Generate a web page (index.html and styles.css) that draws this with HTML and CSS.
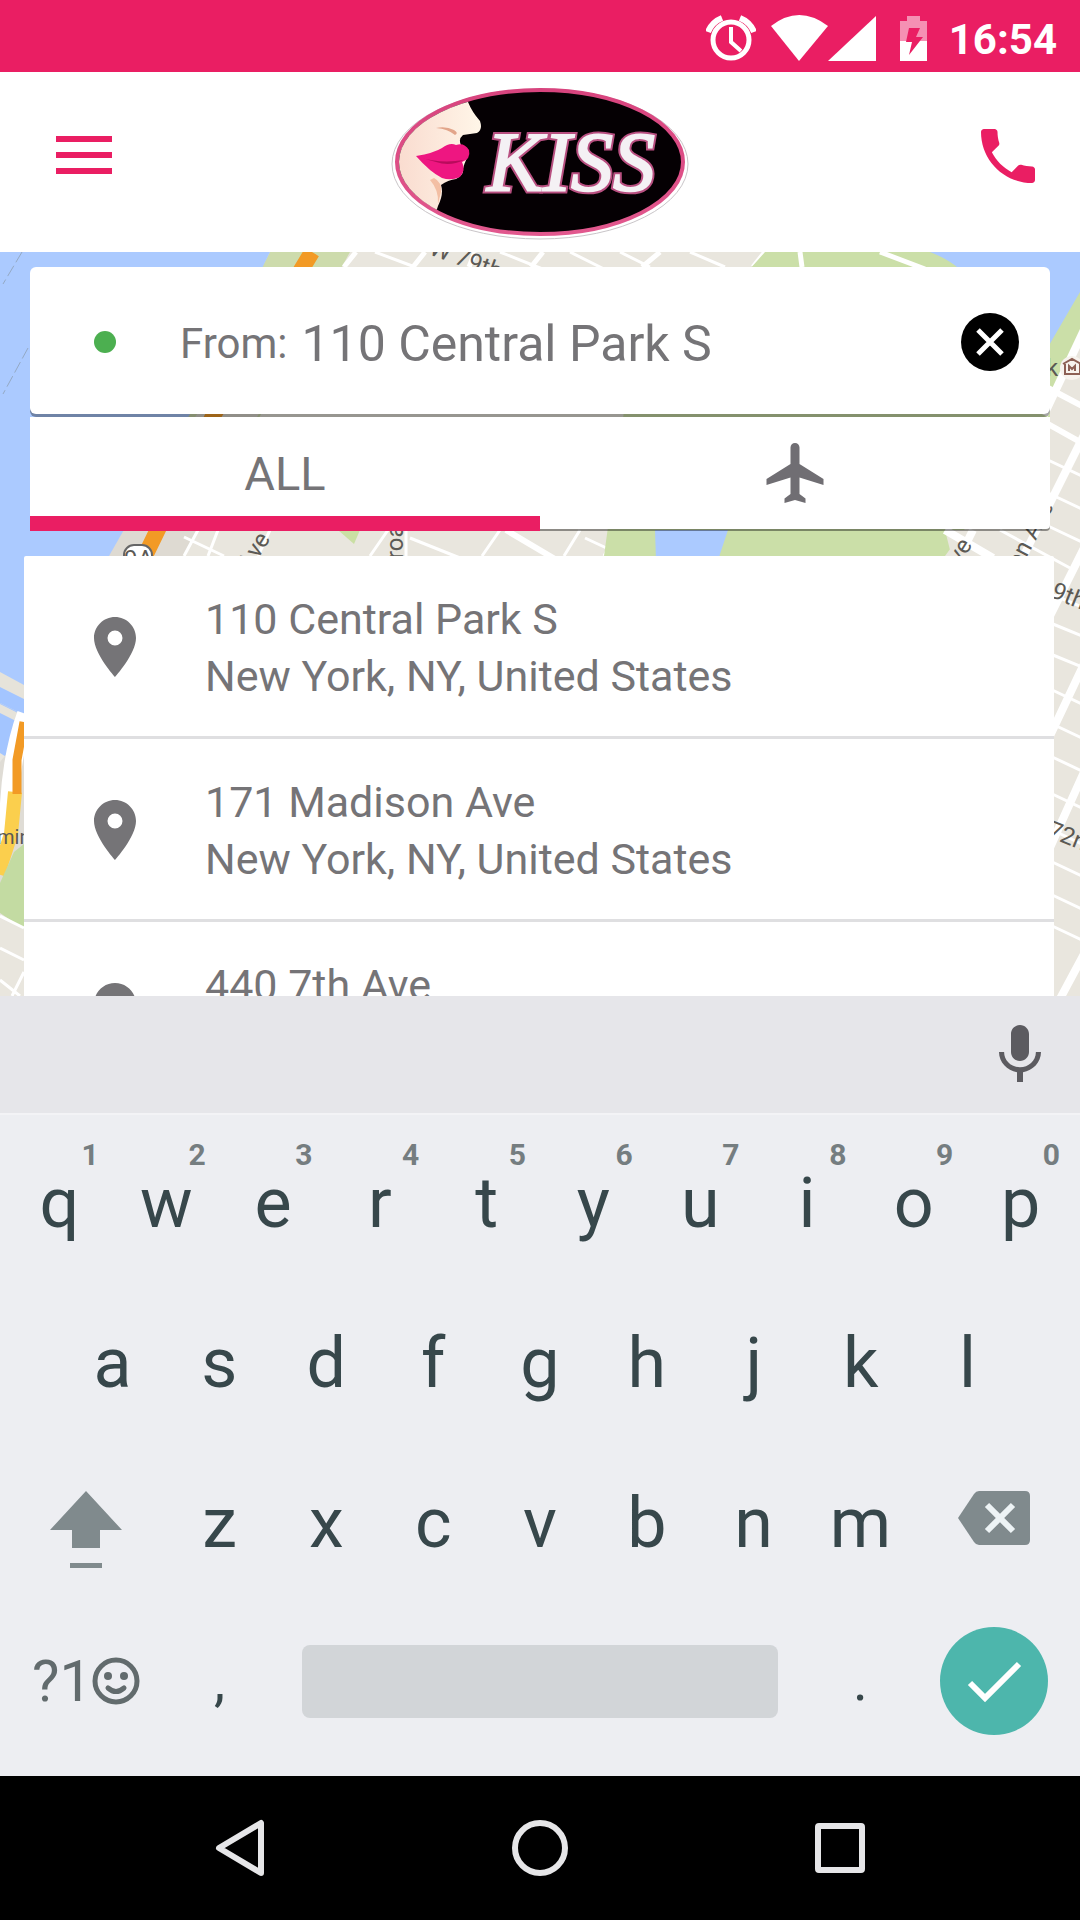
FILE: index.html
```html
<!DOCTYPE html>
<html lang="en">
<head>
  <meta charset="utf-8">
  <meta name="viewport" content="width=device-width, initial-scale=1">
  <title>Kiss – Pick-up address</title>
  <link rel="stylesheet" href="styles.css">
</head>
<body>
  <div class="status-bar">
    <svg class="status-icon alarm" viewBox="0 0 50 46" width="50" height="46" aria-hidden="true">
      <circle cx="25" cy="25" r="18" fill="none" stroke="#fff" stroke-width="5"/>
      <path d="M2 17Q6 7 16 3M48 17Q44 7 34 3" fill="none" stroke="#fff" stroke-width="6"/>
      <path d="M25 12v15l10 9" fill="none" stroke="#fff" stroke-width="4"/>
    </svg>
    <svg class="status-icon" viewBox="0 0 105 46" width="105" height="46" aria-hidden="true">
      <path d="M0 11Q28 -11 57 11L28 46z" fill="#fff"/>
      <path d="M105 1v45H57z" fill="#fff"/>
    </svg>
    <svg class="status-icon battery" viewBox="0 0 27 46" width="27" height="46" aria-hidden="true">
      <path d="M0 6h7V1h13v5h7v20H0z" fill="#f590b3"/>
      <path d="M0 26h27v20H0z" fill="#fff"/>
      <path d="M9 13h11l-4 9h7L9 40l3-13H6z" fill="#ea1e63"/>
    </svg>
    <time class="clock">16:54</time>
  </div>

  <header class="app-bar">
    <button class="icon-button" type="button" aria-label="Menu">
      <svg viewBox="0 0 56 38" width="56" height="38"><path d="M0 0h56v6H0zM0 16h56v6H0zM0 32h56v6H0z" fill="#ea1e63"/></svg>
    </button>
    <svg class="logo" viewBox="0 0 300 160" width="300" height="160" role="img" aria-label="Kiss">
      <defs>
        <clipPath id="face-clip"><ellipse cx="150" cy="80" rx="141" ry="70"/></clipPath>
        <linearGradient id="rim" x1="0" y1="0" x2="0" y2="1">
          <stop offset="0" stop-color="#d8447e"/><stop offset="1" stop-color="#e2588e"/>
        </linearGradient>
        <linearGradient id="skin" x1="0" y1="0" x2="1" y2="0">
          <stop offset="0" stop-color="#f9d9cd"/><stop offset="1" stop-color="#fff6e8"/>
        </linearGradient>
      </defs>
      <ellipse cx="150" cy="82" rx="148" ry="75" fill="#fff" stroke="#c9c5c8" stroke-width="1"/>
      <ellipse cx="150" cy="80" rx="143" ry="72" fill="#050003" stroke="url(#rim)" stroke-width="4"/>
      <g clip-path="url(#face-clip)">
        <path d="M0 0H74L78 20Q82 30 90 39Q93 48 87 51L73 53Q68 57 71 63Q80 70 77 76Q74 82 73 87Q74 93 66 97Q58 98 51 103Q54 112 48 124L44 136H0z" fill="url(#skin)"/>
        <path d="M46 46Q56 44 64 48Q69 51 65 53Q58 47 46 46z" fill="#e2a58a"/>
        <path d="M44 96Q52 100 51 110L48 122Q49 108 40 98z" fill="#f3bfa4"/>
        <path d="M26 74Q44 71 52 66Q60 60 66 63Q74 60 79 68Q81 77 72 80Q76 88 70 95Q61 99 52 96Q40 90 26 74z" fill="#ee1681"/>
        <path d="M28 75Q50 82 74 78Q60 85 46 80z" fill="#b80b5c"/>
      </g>
      <text class="logo-text logo-outline" x="97" y="109">KISS</text>
      <text class="logo-text" x="97" y="109">KISS</text>
    </svg>
    <a class="icon-button call" href="tel:" aria-label="Call">
      <svg viewBox="3 3 18 18" width="54" height="54"><path d="M6.620 10.790c1.440 2.830 3.760 5.140 6.590 6.590l2.200-2.200c.27-.27.67-.36 1.020-.24 1.120.37 2.330.57 3.570.57.55 0 1 .45 1 1V20c0 .55-.45 1-1 1-9.390 0-17-7.610-17-17 0-.55.45-1 1-1h3.500c.55 0 1 .45 1 1 0 1.250.2 2.450.57 3.570.11.35.03.74-.25 1.020z" fill="#ea1e63"/></svg>
    </a>
  </header>

  <main class="map-area">
    <svg class="map" viewBox="0 0 1080 744" preserveAspectRatio="xMidYMin slice" aria-hidden="true">
      <path d="M0 0h1080v744H0z" fill="#e9e6de"/>
      <!-- river and west shore -->
      <path d="M270 0h80L180 310H100z" fill="#cddbac"/>
      <path d="M205 150h60L180 310H100z" fill="#dedad2"/>
      <path d="M0 0H270L190 162 109 304 24 446 0 430z" fill="#abcaff"/>
      <path d="M0 451l24 12v20L8 506 0 501z" fill="#a3c5ff"/>
      <path d="M0 420l24 13v14L0 435z" fill="#e6e3da"/>
      <path d="M0 435l24 12v16L0 451z" fill="#a3c5ff"/>
      <path d="M0 452l24 12v9L0 461z" fill="#e6e3da"/>
      <path d="M22 0 3 32M28 96 3 142" fill="none" stroke="#94a9c4" stroke-width="1" stroke-dasharray="12 4"/>
      <path d="M312 0 214 162 145 304" fill="none" stroke="#f29a25" stroke-width="16"/>
      <!-- city blocks west of the park -->
      <g fill="none" stroke="#fff" stroke-width="3">
        <path d="M356 0l-12 15M425 0l-12 15M475 0l-6 15M543 0l-12 15M660 0l-18 15M765 0l-12 15" stroke-width="5"/>
        <path d="M375 0l40 15M500 0l45 18M570 0l40 20M620 0l30 15M690 0l35 15"/>
        <path d="M198 278l-14 26M218 278l-10 26M184 285l40 19M406 278v26M388 278l-18 26M270 278l-12 26"/>
        <path d="M506 278l54 32" stroke-width="6"/>
        <path d="M410 286l50 20M500 278l-18 26M580 278l-16 26M585 286l30 14M618 278l-14 26"/>
      </g>
      <path d="M338 278h22l-6 14z" fill="#cadfa3"/>
      <!-- park -->
      <path d="M765 0h315v95l-30 50v40H1032L945 304H604l20-145z" fill="#cbdfa8"/>
      <path d="M930 0h150v40l-32 55v-68h-80q-10-16-38-27z" fill="#abcaff"/>
      <path d="M655 278h73l-10 30h-62z" fill="#abcaff"/>
      <path d="M800 0l2 15M880 0l45 17" fill="none" stroke="#fff" stroke-width="5"/>
      <!-- east side -->
      <path d="M1080 95V744h-30V150zM945 278h120v60H960z" fill="#e9e6de"/>
      <g fill="none" stroke="#fff" stroke-width="8">
        <path d="M1084 78l-40 85"/>
        <path d="M1084 183l-60 120"/>
        <path d="M1084 296l-36 72M1084 412l-36 76M1084 520l-36 80M1084 702l-30 56"/>
        <path d="M945 278l48 28M973 278l-10 20"/>
      </g>
      <g fill="none" stroke="#fff" stroke-width="3">
        <path d="M1048 136l34 18M1048 172l34 19" stroke-width="6"/>
        <path d="M1048 208l34 16M1048 241l34 16M1048 274l34 16M1000 278l70 38M1048 341l34 14M1048 370l34 14M1048 401l34 14M1048 436l34 16M1048 470l34 16M1048 503l34 16M1048 540l34 16M1048 576l34 16M1048 608l34 16M1048 641l34 16M1048 672l34 16"/>
      </g>
      <circle cx="1072" cy="116" r="12" fill="#f7f3ee"/>
      <path d="M1063 112l9-5 9 5M1065 112v10h15v-10M1069 119v-5l3 3 3-3v5" fill="none" stroke="#8d6055" stroke-width="2"/>
      <!-- south-west corner -->
      <path d="M0 510l24-30v150L0 640z" fill="#dfdcd5"/>
      <path d="M26 462Q12 500 9 552L-4 612" fill="none" stroke="#fff" stroke-width="18"/>
      <path d="M15 540 11 582-2 622" fill="none" stroke="#fbcf4d" stroke-width="14"/>
      <path d="M24 470 17 508 17 542" fill="none" stroke="#f29a25" stroke-width="9"/>
      <path d="M14 600l10-8v85l-24-16v-30z" fill="#c3dba2"/>
      <path d="M0 663l24 14v67H0z" fill="#e9e6de"/>
      <path d="M0 664l24 12M0 696l24 12M24 720l-12 24M0 728l20 16" fill="none" stroke="#fff" stroke-width="3"/>
      <rect x="124" y="293" width="28" height="26" rx="10" fill="#fff" stroke="#666" stroke-width="2"/>
      <g class="map-label">
        <text x="124" y="315">9A</text>
        <text class="map-place" x="-3" y="592">min</text>
        <text transform="translate(428 2) rotate(20)">W 79th</text>
        <text transform="translate(250 320) rotate(-58)">Ave</text>
        <text transform="translate(403 322) rotate(-90)">Broad</text>
        <text transform="translate(952 326) rotate(-58)">Ave</text>
        <text transform="translate(1020 318) rotate(-62)">on Ave</text>
        <text transform="translate(1050 345) rotate(22)">9th</text>
        <text transform="translate(1046 584) rotate(22)">72nd</text>
        <text x="1046" y="124">k</text>
      </g>
    </svg>

    <div class="search">
      <div class="from-card">
        <span class="dot"></span>
        <label class="from-label" for="from">From:</label>
        <input class="from-input" id="from" type="text" value="110 Central Park S">
        <button class="clear" type="button" aria-label="Clear">
          <svg viewBox="0 0 58 58" width="58" height="58"><circle cx="29" cy="29" r="29"/><path d="M17 17l24 24M41 17 17 41" stroke="#fff" stroke-width="5"/></svg>
        </button>
      </div>
      <nav class="tabs">
        <button class="tab active" type="button">ALL</button>
        <button class="tab" type="button" aria-label="Airports">
          <svg viewBox="0 0 24 24" width="72" height="72"><path d="M21.500 16v-2L13.500 9V3.500c0-.83-.67-1.500-1.500-1.500s-1.500.67-1.500 1.500V9l-8 5v2l8-2.500V19l-2 1.500V22l3.500-1 3.500 1v-1.500L13.500 19v-5.500z" fill="#706e73"/></svg>
        </button>
      </nav>
    </div>

    <ul class="results">
      <li class="result">
        <svg class="pin" viewBox="0 0 24 24" width="72" height="72" aria-hidden="true"><path d="M12 2C8.130 2 5 5.130 5 9c0 5.250 7 13 7 13s7-7.750 7-13c0-3.870-3.130-7-7-7zm0 9.500a2.500 2.500 0 1 1 0-5 2.500 2.500 0 0 1 0 5z"/></svg>
        <span>110 Central Park S<br>New York, NY, United States</span>
      </li>
      <li class="result">
        <svg class="pin" viewBox="0 0 24 24" width="72" height="72" aria-hidden="true"><path d="M12 2C8.130 2 5 5.130 5 9c0 5.250 7 13 7 13s7-7.750 7-13c0-3.870-3.130-7-7-7zm0 9.500a2.500 2.500 0 1 1 0-5 2.500 2.500 0 0 1 0 5z"/></svg>
        <span>171 Madison Ave<br>New York, NY, United States</span>
      </li>
      <li class="result">
        <svg class="pin" viewBox="0 0 24 24" width="72" height="72" aria-hidden="true"><path d="M12 2C8.130 2 5 5.130 5 9c0 5.250 7 13 7 13s7-7.750 7-13c0-3.870-3.130-7-7-7zm0 9.500a2.500 2.500 0 1 1 0-5 2.500 2.500 0 0 1 0 5z"/></svg>
        <span>440 7th Ave</span>
      </li>
    </ul>
  </main>

  <section class="keyboard" aria-label="Keyboard">
    <div class="suggestions">
      <button class="mic" type="button" aria-label="Voice input">
        <svg viewBox="0 0 24 24" width="72" height="72"><path d="M12 14c1.660 0 3-1.340 3-3V5c0-1.660-1.340-3-3-3S9 3.340 9 5v6c0 1.660 1.340 3 3 3zm5.300-3c0 3-2.540 5.100-5.300 5.100S6.700 14 6.700 11H5c0 3.410 2.720 6.230 6 6.720V21h2v-3.280c3.280-.48 6-3.300 6-6.720z" fill="#5c5b60"/></svg>
      </button>
    </div>
    <div class="key-rows">
      <div class="key-row">
        <button class="key" type="button">q<span class="hint">1</span></button>
        <button class="key" type="button">w<span class="hint">2</span></button>
        <button class="key" type="button">e<span class="hint">3</span></button>
        <button class="key" type="button">r<span class="hint">4</span></button>
        <button class="key" type="button">t<span class="hint">5</span></button>
        <button class="key" type="button">y<span class="hint">6</span></button>
        <button class="key" type="button">u<span class="hint">7</span></button>
        <button class="key" type="button">i<span class="hint">8</span></button>
        <button class="key" type="button">o<span class="hint">9</span></button>
        <button class="key" type="button">p<span class="hint">0</span></button>
      </div>
      <div class="key-row inset">
        <button class="key" type="button">a</button>
        <button class="key" type="button">s</button>
        <button class="key" type="button">d</button>
        <button class="key" type="button">f</button>
        <button class="key" type="button">g</button>
        <button class="key" type="button">h</button>
        <button class="key" type="button">j</button>
        <button class="key" type="button">k</button>
        <button class="key" type="button">l</button>
      </div>
      <div class="key-row">
        <button class="key wide shift" type="button" aria-label="Shift">
          <svg viewBox="0 0 72 78" width="72" height="78"><path d="M36 1 72 40H50v18H22V40H0zM20 73h32v5H20z" fill="#808a8d"/></svg>
        </button>
        <button class="key" type="button">z</button>
        <button class="key" type="button">x</button>
        <button class="key" type="button">c</button>
        <button class="key" type="button">v</button>
        <button class="key" type="button">b</button>
        <button class="key" type="button">n</button>
        <button class="key" type="button">m</button>
        <button class="key wide delete" type="button" aria-label="Delete">
          <svg viewBox="0 0 72 54" width="72" height="54"><path d="M0 27 16 3Q18 0 21 0H67Q72 0 72 5V49Q72 54 67 54H21Q18 54 16 51z" fill="#808a8d"/><path d="M29 14l26 26M55 14 29 40" stroke="#edf3f5" stroke-width="6"/></svg>
        </button>
      </div>
      <div class="key-row bottom">
        <button class="key wide symbols" type="button" aria-label="?1 symbols">?1<svg viewBox="0 0 48 48" width="48" height="48"><circle cx="24" cy="24" r="21" fill="none" stroke="#626b6d" stroke-width="5"/><circle cx="16" cy="19" r="4" fill="#626b6d"/><circle cx="32" cy="19" r="4" fill="#626b6d"/><path d="M16 31q8 7 16 0" fill="none" stroke="#626b6d" stroke-width="5" stroke-linecap="round"/></svg></button>
        <button class="key punctuation" type="button">,</button>
        <button class="key space" type="button" aria-label="Space"><span class="space-bar"></span></button>
        <button class="key punctuation" type="button">.</button>
        <button class="key wide" type="button" aria-label="Done">
          <svg class="done" viewBox="0 0 108 108" width="108" height="108"><circle cx="54" cy="54" r="54" fill="#4db6ac"/><path d="M30 56l15 15 34-34" fill="none" stroke="#fff" stroke-width="6"/></svg>
        </button>
      </div>
    </div>
  </section>

  <nav class="system-nav">
    <button class="nav-button" type="button" aria-label="Back">
      <svg viewBox="0 0 60 60" width="60" height="60"><path d="M51 5v50L9 30z" fill="none" stroke="#e6e6e8" stroke-width="6" stroke-linejoin="round"/></svg>
    </button>
    <button class="nav-button" type="button" aria-label="Home">
      <svg viewBox="0 0 60 60" width="60" height="60"><circle cx="30" cy="30" r="25" fill="none" stroke="#e6e6e8" stroke-width="6"/></svg>
    </button>
    <button class="nav-button" type="button" aria-label="Recent apps">
      <svg viewBox="0 0 60 60" width="60" height="60"><rect x="8" y="8" width="44" height="44" rx="1" fill="none" stroke="#e6e6e8" stroke-width="6"/></svg>
    </button>
  </nav>
</body>
</html>
```
FILE: styles.css
```css
* {
  box-sizing: border-box;
}

body {
  margin: 0;
  height: 100vh;
  display: flex;
  flex-direction: column;
  overflow: hidden;
  font-family: Roboto, "Liberation Sans", sans-serif;
  color: #757477;
  background: #fff;
}

button,
input {
  margin: 0;
  padding: 0;
  border: 0;
  background: none;
  font: inherit;
  color: inherit;
}

svg {
  display: block;
  flex: none;
}

/* Status bar */
.status-bar {
  flex: none;
  height: 72px;
  padding: 0 23px;
  display: flex;
  align-items: center;
  justify-content: flex-end;
  background: #ea1e63;
  color: #fff;
}

.status-icon {
  margin-top: 4px;
}

.alarm {
  margin-right: 15px;
}

.battery {
  margin: 4px 22px 0 24px;
}

.clock {
  margin-top: 7px;
  font-size: 42px;
  font-weight: 700;
  line-height: 48px;
}

/* App bar */
.app-bar {
  flex: none;
  height: 180px;
  padding: 0 45px 0 56px;
  display: flex;
  align-items: center;
  justify-content: space-between;
  background: #fff;
}

.app-bar {
  display: grid;
  grid-template-columns: 1fr auto 1fr;
  padding: 0 45px;
}

.icon-button {
  justify-self: start;
  margin-left: 11px;
  padding-bottom: 14px;
}

.icon-button.call {
  justify-self: end;
  margin-left: 0;
  padding-bottom: 12px;
}

.logo-text {
  font: italic 84px "Liberation Serif", "Times New Roman", serif;
  fill: #f4f1f4;
  stroke: #f4f1f4;
  stroke-width: 2;
}

.logo-outline {
  stroke: #b84f80;
  stroke-width: 6;
}

/* Map and search */
.map-area {
  position: relative;
  flex: 1;
  min-height: 0;
  overflow: hidden;
  padding: 15px 24px 0;
}

.map {
  position: absolute;
  inset: 0;
  width: 100%;
  height: 100%;
}

.map-label {
  font-size: 24px;
  fill: #5b5954;
}

.map-place {
  font-size: 20px;
}

.search {
  position: relative;
  margin: 0 6px;
}

.from-card {
  height: 147px;
  padding: 3px 31px 0 64px;
  display: flex;
  align-items: center;
  background: #fff;
  border-radius: 6px;
  box-shadow: 0 3px 0 rgba(0, 0, 0, 0.35);
}

.dot {
  flex: none;
  width: 22px;
  height: 22px;
  margin-right: 64px;
  border-radius: 50%;
  background: #4caf50;
}

.from-label {
  padding-top: 4px;
  font-size: 42px;
  line-height: 60px;
}

.from-input {
  flex: 1;
  min-width: 0;
  margin-left: 14px;
  padding-top: 4px;
  font-size: 50px;
  line-height: 60px;
}

.tabs {
  display: flex;
  height: 112px;
  margin-top: 3px;
  background: #fff;
  border-radius: 0 0 4px 4px;
  box-shadow: 0 2px 0 rgba(0, 0, 0, 0.4);
}

.tab {
  flex: 1;
  display: flex;
  align-items: center;
  justify-content: center;
  font-size: 47px;
}

.tab.active {
  height: 114px;
  border-top: 14px solid transparent;
  border-bottom: 15px solid #ea1e63;
}

/* Results */
.results {
  position: relative;
  margin: 27px 2px 0 0;
  padding: 0;
  list-style: none;
  background: #fff;
  border-radius: 2px;
}

.result {
  height: 183px;
  padding: 35px 55px 0;
  display: flex;
  gap: 54px;
  border-bottom: 3px solid #dfdfe1;
  font-size: 43px;
  line-height: 57px;
}

.pin {
  margin-top: 20px;
  fill: #757477;
}

/* Keyboard */
.keyboard {
  flex: none;
  background: #edeef2;
}

.suggestions {
  height: 119px;
  padding: 0 24px;
  display: flex;
  align-items: center;
  justify-content: flex-end;
  background: #e6e6ea;
  border-bottom: 2px solid #f3f3f6;
}

.key-rows {
  padding: 8px 6px 17px;
}

.key-row {
  display: flex;
  height: 160px;
}

.key-row.inset {
  padding: 0 53px;
}

.key-row.bottom {
  height: 156px;
}

.key {
  position: relative;
  flex: 2 1 0;
  min-width: 0;
  display: flex;
  align-items: center;
  justify-content: center;
  font-size: 70px;
  line-height: 80px;
  color: #37474b;
}

.key.wide {
  flex-grow: 3;
}

.key.shift {
  padding-top: 12px;
}

.key.delete {
  padding-bottom: 10px;
}

.key.space {
  flex-grow: 10;
}

.key.punctuation {
  font-size: 56px;
}

.hint {
  position: absolute;
  top: 14px;
  right: 14px;
  font-size: 30px;
  font-weight: 700;
  line-height: 36px;
  color: #757d80;
}

.key.symbols {
  font-size: 58px;
  color: #626b6d;
}

.space-bar {
  flex: 1;
  height: 73px;
  margin: 0 29px;
  border-radius: 8px;
  background: #d2d5d8;
}

/* System navigation */
.system-nav {
  flex: none;
  height: 144px;
  display: flex;
  align-items: center;
  justify-content: center;
  gap: 240px;
  background: #000;
}
```
